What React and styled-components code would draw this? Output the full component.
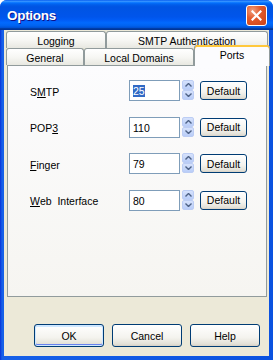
import React from "react";
import styled, { createGlobalStyle } from "styled-components";

const Global = createGlobalStyle`
  html, body { margin: 0; padding: 0; background: #fff; }
  body { font-family: "Liberation Sans", Arial, sans-serif; font-size: 10.5px; }
`;

const Window = styled.div`
  width: 273px;
  height: 360px;
  display: flex;
  flex-direction: column;
  background: linear-gradient(to right, #0831d9 0px, #1660e8 2px, #0b52e0 100%);
  border-radius: 7px 7px 0 0;
  overflow: hidden;
`;

const TitleBar = styled.div`
  height: 30px;
  flex: none;
  display: flex;
  align-items: center;
  justify-content: space-between;
  padding: 0 6px 0 7px;
  background: linear-gradient(to bottom, #0058ee 0%, #3a93ff 4%, #288eff 6%, #127dff 8%, #036ffc 10%, #0262ee 14%, #0057e5 20%, #0054e3 24%, #0055eb 56%, #005bf5 66%, #026afe 76%, #0062ef 86%, #0052d6 92%, #0040ab 94%, #003092 100%);
`;

const Title = styled.span`
  color: #fff;
  font-weight: bold;
  font-size: 13.5px;
  letter-spacing: -0.3px;
  text-shadow: 1px 1px #0f1089;
  margin-top: 1px;
`;

const CloseBtn = styled.div`
  width: 19px;
  height: 19px;
  border: 1px solid #fff;
  border-radius: 3px;
  display: flex;
  align-items: center;
  justify-content: center;
  background: radial-gradient(circle at 30% 25%, #f0a080 0%, #e35a2c 40%, #cc4216 100%);
  margin-top: 1px;
`;

const Body = styled.div`
  flex: 1;
  margin: 0 4px 4px 4px;
  background: #ece9d8;
  display: flex;
  flex-direction: column;
  padding: 1px 2px 9px 2px;
`;

const TabRow = styled.div`
  display: flex;
  height: 17px;
  position: relative;
  z-index: ${(p) => p.$z || 0};
`;

const Tab = styled.div`
  width: ${(p) => p.$w}px;
  flex: none;
  box-sizing: border-box;
  border: 1px solid #919b9c;
  border-bottom: none;
  border-radius: 3px 3px 0 0;
  background: linear-gradient(to bottom, #ffffff 0%, #f7f7f4 50%, #e8e8e1 100%);
  display: flex;
  align-items: center;
  justify-content: center;
  color: #000;
  padding-top: 1px;
`;

const ActiveTab = styled(Tab)`
  margin-top: -3px;
  height: 21px;
  margin-right: -2px;
  border-top: none;
  background: #fcfcfe;
  box-shadow: inset 0 2px 0 #ffc83c, inset 0 1px 0 #e68b2c;
  align-items: flex-start;
  padding-top: 4px;
  position: relative;
  z-index: 2;
`;

const Panel = styled.div`
  height: 232px;
  box-sizing: border-box;
  margin-left: 1px;
  border: 1px solid #919b9c;
  background: linear-gradient(to bottom, #fcfcfe 0%, #f6f5f1 100%);
  display: grid;
  grid-template-columns: 99px 51px 12px 47px;
  grid-auto-rows: 21px;
  row-gap: 15.5px;
  align-content: start;
  padding: 14px 0 0 22px;
`;

const Label = styled.div`
  display: flex;
  align-items: center;
  padding-top: 2px;
  color: #000;
  u { text-decoration: underline; text-underline-offset: 1px; }
`;

const Input = styled.div`
  box-sizing: border-box;
  border: 1px solid #7f9db9;
  background: #fff;
  display: flex;
  align-items: center;
  padding-left: 3px;
  padding-top: 1px;
  color: #000;
`;

const Selected = styled.span`
  background: #316ac5;
  color: #fff;
`;

const Spinner = styled.div`
  margin-left: 2px;
  width: 12px;
  height: 20px;
  display: flex;
  flex-direction: column;
`;

const SpinHalf = styled.div`
  flex: 1;
  box-sizing: border-box;
  border: 1px solid #bccdf4;
  border-radius: 2px;
  background: linear-gradient(to bottom, #d6e2fc 0%, #b9cdf8 100%);
  display: flex;
  align-items: center;
  justify-content: center;
`;

const DefaultBtn = styled.button`
  margin-left: 8px;
  width: 47px;
  height: 19px;
  margin-top: 1px;
  padding: 0;
  box-sizing: border-box;
  border: 1px solid #003c74;
  border-radius: 3px;
  background: linear-gradient(to bottom, #ffffff 0%, #f4f3ee 60%, #e3e1d8 90%, #d6d0c5 100%);
  font: 10.5px "Liberation Sans", Arial, sans-serif;
  color: #000;
`;

const ButtonRow = styled.div`
  margin-top: 27px;
  display: flex;
  justify-content: flex-end;
  gap: 8px;
  padding-right: 7px;
`;

const Button = styled.button`
  width: 70px;
  height: 23px;
  padding: 0;
  box-sizing: border-box;
  border: 1px solid #003c74;
  border-radius: 3px;
  background: linear-gradient(to bottom, #ffffff 0%, #f4f3ee 60%, #e3e1d8 90%, #d6d0c5 100%);
  font: 10.5px "Liberation Sans", Arial, sans-serif;
  color: #000;
  box-shadow: ${(p) =>
    p.$default ? "inset 0 0 0 1px #cee7ff, inset 0 -1px 0 1px #6982ee, inset 0 1px 0 1px #cee7ff" : "none"};
`;

const Up = () => (
  <svg width="7" height="4" viewBox="0 0 7 4">
    <path d="M0.5 3.5 L3.5 0.5 L6.5 3.5" fill="none" stroke="#4d6185" strokeWidth="1.4" />
  </svg>
);

const Down = () => (
  <svg width="7" height="4" viewBox="0 0 7 4">
    <path d="M0.5 0.5 L3.5 3.5 L6.5 0.5" fill="none" stroke="#4d6185" strokeWidth="1.4" />
  </svg>
);

const ports = [
  { label: <>S<u>M</u>TP</>, value: "25", selected: true },
  { label: <>POP<u>3</u></>, value: "110" },
  { label: <><u>F</u>inger</>, value: "79" },
  { label: <><u>W</u>eb&nbsp; Interface</>, value: "80" },
];

export default function App() {
  return (
    <>
      <Global />
      <Window>
        <TitleBar>
          <Title>Options</Title>
          <CloseBtn>
            <svg width="11" height="11" viewBox="0 0 11 11">
              <path d="M1.5 1.5 L9.5 9.5 M9.5 1.5 L1.5 9.5" stroke="#fff" strokeWidth="2.2" strokeLinecap="square" />
            </svg>
          </CloseBtn>
        </TitleBar>
        <Body>
          <TabRow>
            <Tab $w={100}>Logging</Tab>
            <Tab $w={162}>SMTP Authentication</Tab>
          </TabRow>
          <TabRow $z={1}>
            <Tab $w={78}>General</Tab>
            <Tab $w={110}>Local Domains</Tab>
            <ActiveTab $w={76}>Ports</ActiveTab>
          </TabRow>
          <Panel>
            {ports.map((p, i) => (
              <React.Fragment key={i}>
                <Label>{p.label}</Label>
                <Input>{p.selected ? <Selected>{p.value}</Selected> : p.value}</Input>
                <Spinner>
                  <SpinHalf><Up /></SpinHalf>
                  <SpinHalf><Down /></SpinHalf>
                </Spinner>
                <DefaultBtn>Default</DefaultBtn>
              </React.Fragment>
            ))}
          </Panel>
          <ButtonRow>
            <Button $default>OK</Button>
            <Button>Cancel</Button>
            <Button>Help</Button>
          </ButtonRow>
        </Body>
      </Window>
    </>
  );
}
